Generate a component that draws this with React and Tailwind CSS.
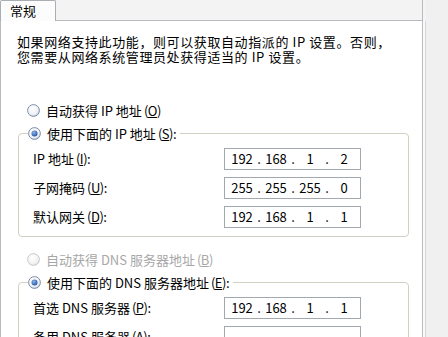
import React from 'react';

// XP style radio button
const Radio = ({ checked, disabled }) => (
  <svg width="13" height="13" viewBox="0 0 13 13" className="shrink-0">
    <defs>
      <radialGradient id={disabled ? 'rg-off' : 'rg-on'} cx="40%" cy="35%" r="70%">
        <stop offset="0%" stopColor="#ffffff" />
        <stop offset="70%" stopColor={disabled ? '#f2f2f2' : '#eef1f6'} />
        <stop offset="100%" stopColor={disabled ? '#dedede' : '#b9c6d8'} />
      </radialGradient>
      <radialGradient id="dot" cx="40%" cy="35%" r="65%">
        <stop offset="0%" stopColor="#8fb6ea" />
        <stop offset="100%" stopColor="#2555a3" />
      </radialGradient>
    </defs>
    <circle
      cx="6.5"
      cy="6.5"
      r="5.9"
      fill={`url(#${disabled ? 'rg-off' : 'rg-on'})`}
      stroke={disabled ? '#c9c9c9' : '#7f8fa8'}
      strokeWidth="1"
    />
    {checked && <circle cx="6.5" cy="6.5" r="3" fill="url(#dot)" />}
  </svg>
);

const IpBox = ({ parts }) => (
  <div className="flex items-center w-[137px] h-[22px] border border-[#a3a8ae] bg-white pl-[3px] text-[13px] leading-[20px]">
    {parts.map((p, i) => (
      <React.Fragment key={i}>
        {i > 0 && <span className="w-[6px] text-center">.</span>}
        <span className="w-[28px] text-center">{p}</span>
      </React.Fragment>
    ))}
  </div>
);

// mnemonic key, e.g. (O)
const Key = ({ k }) => (
  <span className="ml-[2px] tracking-[-0.5px]">
    (<u>{k}</u>)
  </span>
);

const Row = ({ label, parts }) => (
  <div className="flex items-center h-[22px] pl-[14px]">
    <span className="w-[191px] whitespace-nowrap">{label}</span>
    <IpBox parts={parts} />
  </div>
);

const Group = ({ legend, children }) => (
  <fieldset className="ml-[17px] w-[391px] border border-[#d0d0c4] rounded-[4px] pb-[8px]">
    <legend className="ml-[9px] pr-[3px] h-[17px] leading-[17px]">
      <span className="flex items-center gap-[6px] whitespace-nowrap">
        <Radio checked />
        <span>{legend}</span>
      </span>
    </legend>
    <div className="flex flex-col gap-[7px] mt-[6px]">{children}</div>
  </fieldset>
);

export default function App() {
  return (
    <div className="flex w-[448px] h-[337px] overflow-hidden bg-[#f3f3f3] text-black text-[13px] font-['Noto_Sans_CJK_SC',sans-serif]">
      <div className="flex flex-col w-[423px]">
        {/* tab strip */}
        <div className="flex h-[21px] shrink-0">
          <div className="w-[56px] h-[21px] bg-[#fcfcfc] border-t border-l border-r border-[#a9aeb4] rounded-t-[2px] pl-[9px] leading-[19px]">
            常规
          </div>
          <div className="flex-1 border-b border-r border-[#b8bcc0]" />
        </div>

        {/* panel */}
        <div className="flex-1 bg-white border-r border-l border-[#b8bcc0]">
          <p className="mt-[13px] pl-[16px] leading-[15px] whitespace-nowrap tracking-[0.6px]">
            如果网络支持此功能，则可以获取自动指派的 IP 设置。否则，
            <br />
            您需要从网络系统管理员处获得适当的 IP 设置。
          </p>

          <div className="flex items-center gap-[6px] h-[17px] mt-[38px] ml-[26px] whitespace-nowrap">
            <Radio />
            <span>自动获得 IP 地址<Key k="O" /></span>
          </div>

          <div className="mt-[6px]">
            <Group legend={<>使用下面的 IP 地址<Key k="S" />:</>}>
              <Row label={<>IP 地址<Key k="I" />:</>} parts={['192', '168', '1', '2']} />
              <Row label={<>子网掩码<Key k="U" />:</>} parts={['255', '255', '255', '0']} />
              <Row label={<>默认网关<Key k="D" />:</>} parts={['192', '168', '1', '1']} />
            </Group>
          </div>

          <div className="flex items-center gap-[6px] h-[17px] mt-[14px] ml-[26px] whitespace-nowrap text-[#a7a7a7]">
            <Radio disabled />
            <span>自动获得 DNS 服务器地址<Key k="B" /></span>
          </div>

          <div className="mt-[6px]">
            <Group legend={<>使用下面的 DNS 服务器地址<Key k="E" />:</>}>
              <Row label={<>首选 DNS 服务器<Key k="P" />:</>} parts={['192', '168', '1', '1']} />
              <Row label={<>备用 DNS 服务器<Key k="A" />:</>} parts={['', '', '', '']} />
            </Group>
          </div>
        </div>
      </div>

      {/* right edge */}
      <div className="flex-1 flex">
        <div className="w-[2px] mt-[21px] bg-[#fafafa]" />
        <div className="w-[1px] mt-[21px] bg-[#d6d6d6]" />
        <div className="flex-1 bg-[#f0f0f0]" />
      </div>
    </div>
  );
}
